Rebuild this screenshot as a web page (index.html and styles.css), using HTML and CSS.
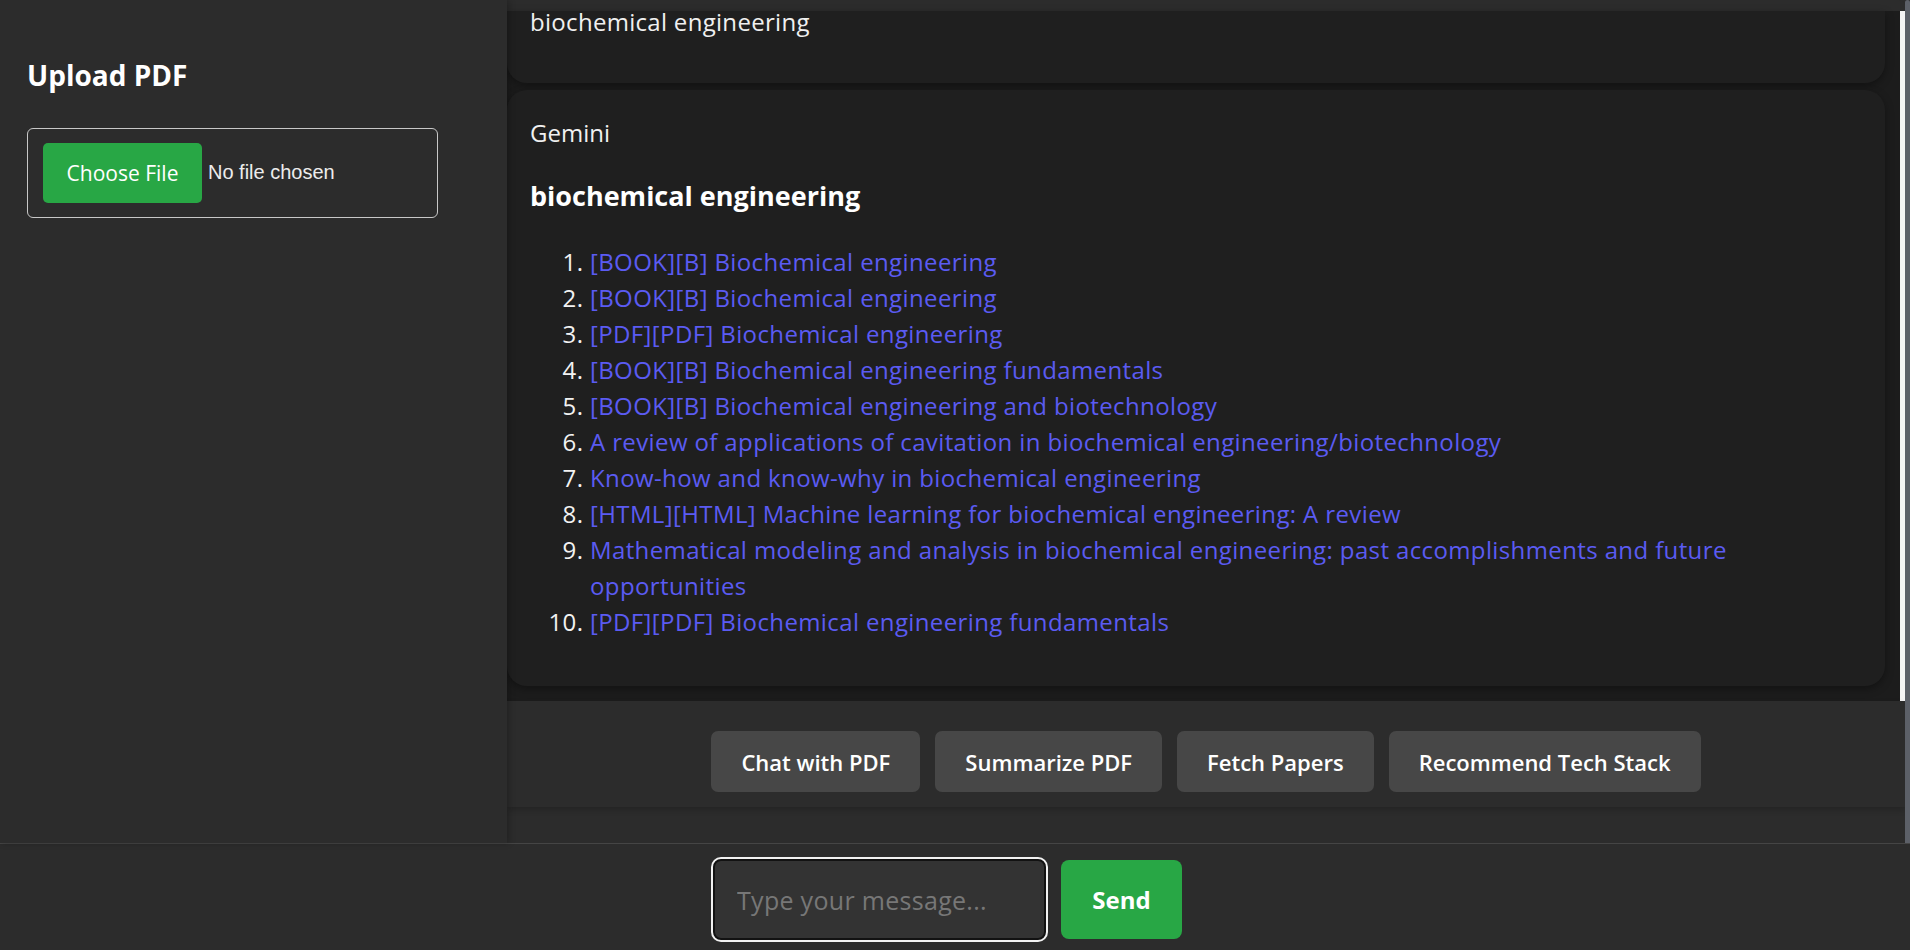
FILE: index.html
```html
<!DOCTYPE html>
<html lang="en">
<head>
<meta charset="utf-8">
<title>PDF Assistant</title>
<link rel="stylesheet" href="styles.css">
</head>
<body>
<div class="app">
  <aside class="sidebar">
    <h2 class="side-title">Upload PDF</h2>
    <div class="file-box">
      <button class="file-btn" type="button">Choose File</button>
      <span class="file-status">No file chosen</span>
    </div>
  </aside>
  <main class="main">
    <div class="chat-row">
      <div class="chat">
        <div class="card card-user">
          <p class="msg-text">biochemical engineering</p>
        </div>
        <div class="card card-bot">
          <div class="sender">Gemini</div>
          <h3 class="result-title">biochemical engineering</h3>
          <ol class="results">
            <li><a href="#">[BOOK][B] Biochemical engineering</a></li>
            <li><a href="#">[BOOK][B] Biochemical engineering</a></li>
            <li><a href="#">[PDF][PDF] Biochemical engineering</a></li>
            <li><a href="#">[BOOK][B] Biochemical engineering fundamentals</a></li>
            <li><a href="#">[BOOK][B] Biochemical engineering and biotechnology</a></li>
            <li><a href="#">A review of applications of cavitation in biochemical engineering/biotechnology</a></li>
            <li><a href="#">Know-how and know-why in biochemical engineering</a></li>
            <li><a href="#">[HTML][HTML] Machine learning for biochemical engineering: A review</a></li>
            <li><a href="#">Mathematical modeling and analysis in biochemical engineering: past accomplishments and future opportunities</a></li>
            <li><a href="#">[PDF][PDF] Biochemical engineering fundamentals</a></li>
          </ol>
        </div>
      </div>
      <div class="chat-track"></div>
    </div>
    <div class="actions">
      <button class="action-btn" type="button">Chat with PDF</button>
      <button class="action-btn" type="button">Summarize PDF</button>
      <button class="action-btn" type="button">Fetch Papers</button>
      <button class="action-btn" type="button">Recommend Tech Stack</button>
    </div>
  </main>
  <div class="page-thumb"></div>
</div>
<footer class="input-bar">
  <input class="msg-input" type="text" placeholder="Type your message...">
  <button class="send-btn" type="button">Send</button>
</footer>
</body>
</html>
```

FILE: styles.css
```css
* { box-sizing: border-box; }

html, body {
  margin: 0;
  height: 950px;
  overflow: hidden;
  background: #2c2c2c;
  font-family: "Open Sans", "Noto Sans", sans-serif;
  color: #f0f0f0;
}

.app {
  display: flex;
  height: 843px;
}

.sidebar {
  width: 507px;
  flex: 0 0 507px;
  background: #2c2c2c;
  padding: 0 27px;
  box-shadow: 2px 0 6px rgba(0, 0, 0, 0.25);
  position: relative;
  z-index: 1;
}

.side-title {
  margin: 59px 0 35px;
  font-size: 28px;
  line-height: 1.2;
  font-weight: 700;
  color: #ffffff;
}

.file-box {
  width: 411px;
  height: 90px;
  border: 1px solid #c8c8c8;
  border-radius: 6px;
  padding: 0 15px;
  display: flex;
  align-items: center;
}

.file-btn {
  width: 159px;
  height: 60px;
  border: none;
  border-radius: 5px;
  background: #28a745;
  color: #ffffff;
  font-family: "Open Sans", sans-serif;
  font-size: 21px;
  padding: 0;
}

.file-status {
  margin-left: 6px;
  font-family: "Liberation Sans", Arial, sans-serif;
  font-size: 20px;
  color: #ececec;
}

.main {
  flex: 1;
  display: flex;
  flex-direction: column;
  padding-top: 11px;
  background: #2c2c2c;
  border-top-right-radius: 6px;
  min-width: 0;
}

.chat-row {
  display: flex;
  height: 690px;
}

.chat {
  flex: 1;
  background: #1c1c1c;
  padding-right: 15px;
}

.chat-track {
  width: 5px;
  background: #f4f4f4;
}

.page-thumb {
  width: 5px;
  flex: 0 0 5px;
  background: #5c6068;
  border-top-left-radius: 3px;
  border-top-right-radius: 3px;
}

.card {
  background: #1f1f1f;
  border-radius: 20px;
  box-shadow: 0 3px 8px rgba(0, 0, 0, 0.35);
  padding: 0 23px;
}

.card-user {
  padding-top: 1px;
  padding-bottom: 51px;
  margin-bottom: 7px;
  border-top-left-radius: 0;
  border-top-right-radius: 0;
}

.msg-text {
  margin: 0;
  font-size: 24px;
  line-height: 20px;
  letter-spacing: 0.3px;
}

.card-bot {
  padding-top: 25px;
  padding-bottom: 46px;
}

.sender {
  font-size: 24px;
  line-height: 36px;
}

.result-title {
  margin: 27px 0 31px;
  font-size: 27px;
  line-height: 35px;
  font-weight: 700;
  color: #ffffff;
}

.results {
  margin: 0;
  padding-left: 60px;
  font-size: 24px;
  line-height: 36px;
  letter-spacing: 0.38px;
}

.results li::marker {
  color: #f2f2f2;
}

.results a {
  color: #5b5bf2;
  text-decoration: none;
}

.actions {
  height: 106px;
  display: flex;
  justify-content: center;
  gap: 15px;
  padding-top: 30px;
  background: #2c2c2c;
  box-shadow: 0 3px 6px rgba(0, 0, 0, 0.18);
}

.action-btn {
  height: 61px;
  padding: 0 30px;
  border: none;
  border-radius: 7px;
  background: #474747;
  color: #ffffff;
  font-family: "Open Sans", sans-serif;
  font-size: 22px;
  font-weight: 600;
}

.input-bar {
  height: 107px;
  border-top: 1px solid #454545;
  background: #2c2c2c;
  display: flex;
  align-items: center;
  justify-content: center;
  gap: 15px;
  padding-top: 5px;
  padding-right: 15px;
}

.msg-input {
  width: 333px;
  height: 81px;
  border: 2px solid #121212;
  border-radius: 8px;
  box-shadow: 0 0 0 2px #f2f2f2;
  background: #333333;
  color: #f0f0f0;
  padding: 0 22px;
  font-family: "Open Sans", sans-serif;
  font-size: 25px;
  letter-spacing: 0.3px;
  outline: none;
}

.msg-input::placeholder {
  color: #777777;
}

.send-btn {
  width: 121px;
  height: 79px;
  border: none;
  border-radius: 8px;
  background: #28a745;
  color: #ffffff;
  font-family: "Open Sans", sans-serif;
  font-size: 24px;
  font-weight: 700;
}
```
